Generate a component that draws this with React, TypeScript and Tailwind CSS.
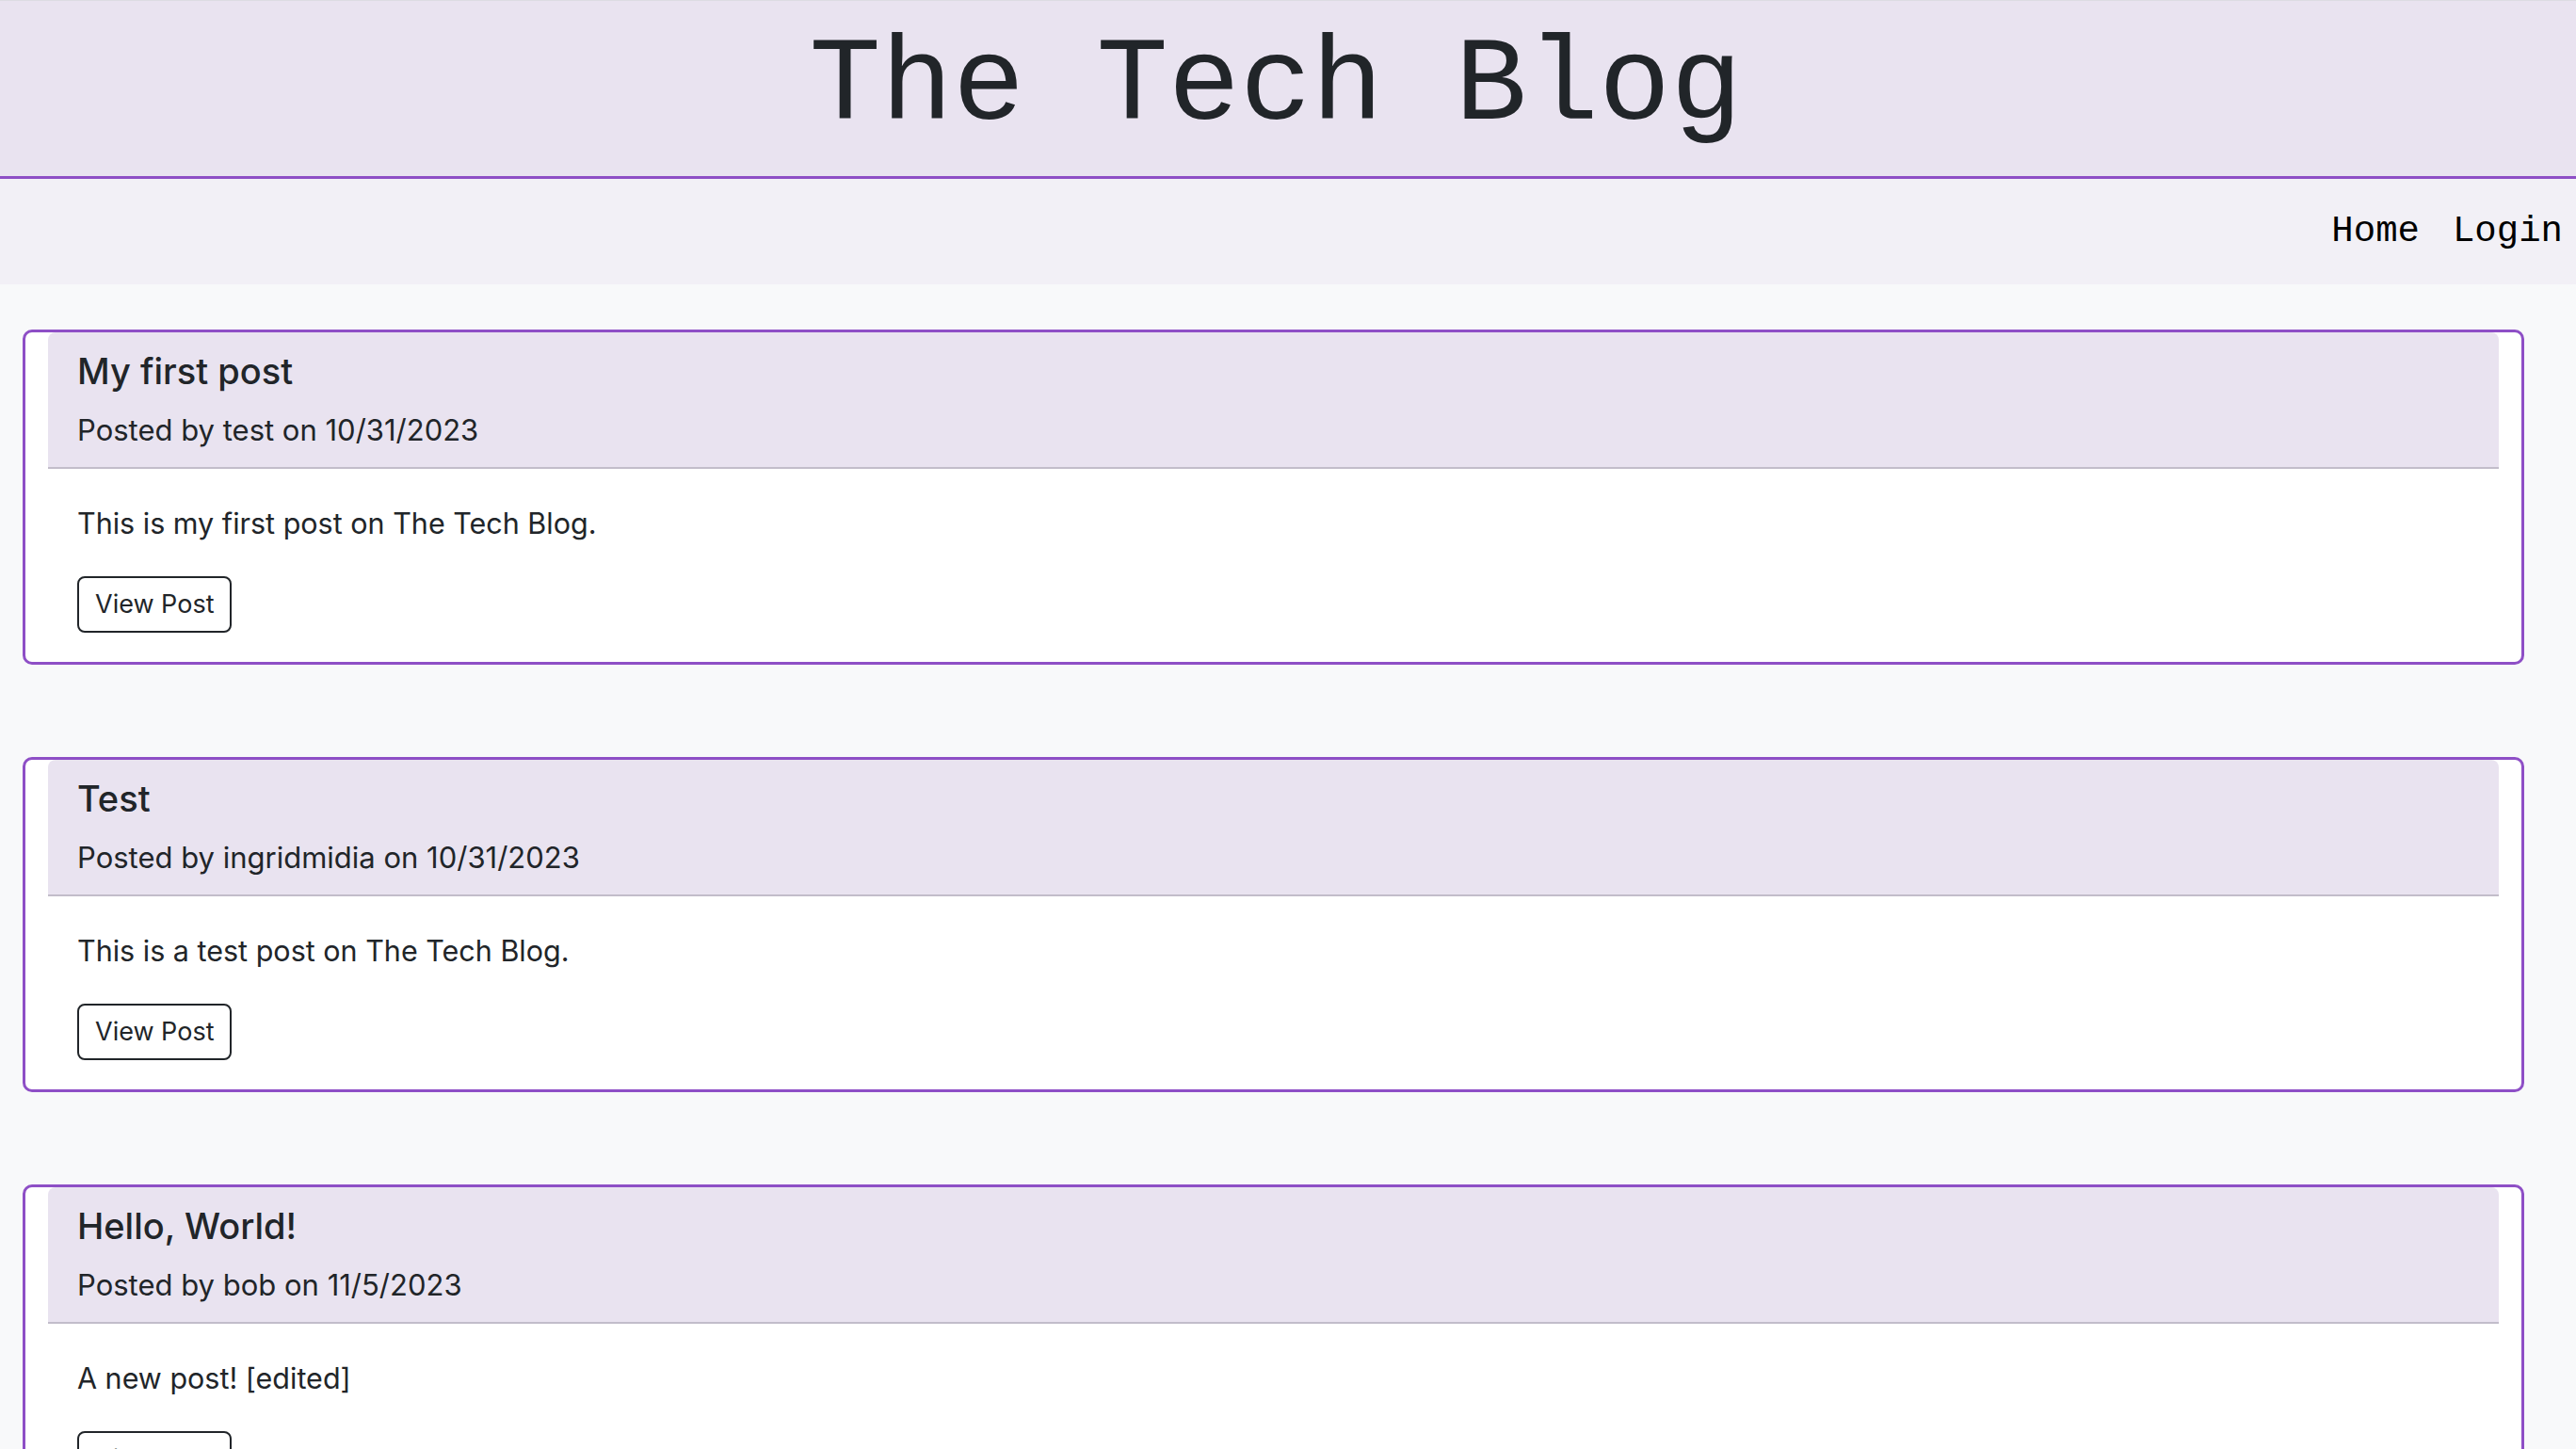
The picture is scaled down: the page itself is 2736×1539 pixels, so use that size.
const posts = [
  {
    title: "My first post",
    author: "test",
    date: "10/31/2023",
    body: "This is my first post on The Tech Blog.",
  },
  {
    title: "Test",
    author: "ingridmidia",
    date: "10/31/2023",
    body: "This is a test post on The Tech Blog.",
  },
  {
    title: "Hello, World!",
    author: "bob",
    date: "11/5/2023",
    body: "A new post! [edited]",
  },
];

function PostCard({ post }: { post: (typeof posts)[number] }) {
  return (
    <div className="rounded-[10px] border-[3px] border-[#8e4fc6] bg-white px-[24px] pb-[31px]">
      <div className="rounded-t-[8px] border-b-2 border-[#c2bdca] bg-[#e9e3f0] px-[31px] pt-[18px] pb-[21px]">
        <h2 className="text-[38px] leading-[46px] font-medium text-[#212529]">{post.title}</h2>
        <p className="mt-[22px] text-[31px] leading-[36px] text-[#212529]">
          Posted by {post.author} on {post.date}
        </p>
      </div>
      <div className="px-[31px] pt-[40px]">
        <p className="text-[30.5px] leading-[36px] text-[#212529]">{post.body}</p>
        <button className="mt-[38px] h-[60px] rounded-[8px] border-2 border-[#212529] bg-white px-[17px] text-[27px] text-[#212529]">
          View Post
        </button>
      </div>
    </div>
  );
}

export default function App() {
  return (
    <div className="min-h-screen border-t border-[#dcdce2] bg-[#f8f9fa] font-['Inter',sans-serif]">
      <header className="flex h-[189px] items-start justify-center border-b-[3px] border-[#8e4fc6] bg-[#e9e3f0] pt-[18px] pr-[26px]">
        <h1 className="font-['Liberation_Mono',monospace] text-[127px] leading-[147px] text-[#212529]">
          The Tech Blog
        </h1>
      </header>
      <nav className="flex h-[112px] items-center justify-end gap-[35px] bg-[#f2f0f6] pr-[14px]">
        <a href="#" className="font-['Liberation_Mono',monospace] text-[39px] text-black">Home</a>
        <a href="#" className="font-['Liberation_Mono',monospace] text-[39px] text-black">Login</a>
      </nav>
      <main className="flex flex-col gap-[98px] pt-[48px] pl-[24px] pr-[55px]">
        {posts.map((post) => (
          <PostCard key={post.title} post={post} />
        ))}
      </main>
    </div>
  );
}
